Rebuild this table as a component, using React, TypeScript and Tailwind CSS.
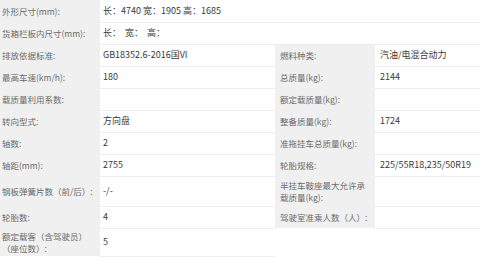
import React from "react";

type Cell = { label: string; value?: string };

interface Row {
    h: string;
    left: Cell;
    right?: Cell | null;
    full?: boolean;
}

const rows: Row[] = [
    { h: "h-[22px]", left: { label: "外形尺寸(mm):", value: "长：4740 宽：1905 高：1685" }, full: true },
    { h: "h-[22px]", left: { label: "货箱栏板内尺寸(mm):", value: "长：  宽：  高：" }, full: true },
    { h: "h-[22px]", left: { label: "排放依据标准:", value: "GB18352.6-2016国VI" }, right: { label: "燃料种类:", value: "汽油/电混合动力" } },
    { h: "h-[22px]", left: { label: "最高车速(km/h):", value: "180" }, right: { label: "总质量(kg):", value: "2144" } },
    { h: "h-[22px]", left: { label: "载质量利用系数:", value: "" }, right: { label: "额定载质量(kg):", value: "" } },
    { h: "h-[22px]", left: { label: "转向型式:", value: "方向盘" }, right: { label: "整备质量(kg):", value: "1724" } },
    { h: "h-[22px]", left: { label: "轴数:", value: "2" }, right: { label: "准拖挂车总质量(kg):", value: "" } },
    { h: "h-[22px]", left: { label: "轴距(mm):", value: "2755" }, right: { label: "轮胎规格:", value: "225/55R18,235/50R19" } },
    { h: "h-[30px]", left: { label: "钢板弹簧片数（前/后）:", value: "-/-" }, right: { label: "半挂车鞍座最大允许承载质量(kg):", value: "" } },
    { h: "h-[22px]", left: { label: "轮胎数:", value: "4" }, right: { label: "驾驶室准乘人数（人）:", value: "" } },
    { h: "h-[28px]", left: { label: "额定载客（含驾驶员）（座位数）:", value: "5" }, right: null },
];

const labelCls = "bg-[#f0f0f0] text-[#6b6b6b] align-middle leading-[12px] text-[8.5px] p-0";
const valueCls = "text-[#3a3a3a] align-middle leading-[12px] text-[9px] border-b border-[#ededed] p-0 whitespace-pre";

export default function App() {
    return (
        <div
            className="w-[480px] h-[258px] overflow-hidden bg-white"
            style={{ fontFamily: '"Noto Sans CJK SC", "Noto Sans", sans-serif' }}
        >
            <table className="w-[480px] table-fixed border-collapse">
                <colgroup>
                    <col className="w-[100px]" />
                    <col className="w-[175px]" />
                    <col className="w-[100px]" />
                    <col className="w-[105px]" />
                </colgroup>
                <tbody>
                    {rows.map((row, i) => (
                        <tr key={i} className={row.h}>
                            <td className={`${labelCls} pl-[2px] pr-[3px]`}>{row.left.label}</td>
                            {row.full ? (
                                <td colSpan={3} className={`${valueCls} pl-[3px]`}>{row.left.value}</td>
                            ) : (
                                <td className={`${valueCls} pl-[3px]`}>{row.left.value}</td>
                            )}
                            {row.right && (
                                <>
                                    <td className={`${labelCls} pl-[5px] pr-[2px]`}>{row.right.label}</td>
                                    <td className={`${valueCls} pl-[5px]`}>{row.right.value}</td>
                                </>
                            )}
                            {row.right === null && <td colSpan={2} className="bg-white p-0" />}
                        </tr>
                    ))}
                </tbody>
            </table>
        </div>
    );
}
